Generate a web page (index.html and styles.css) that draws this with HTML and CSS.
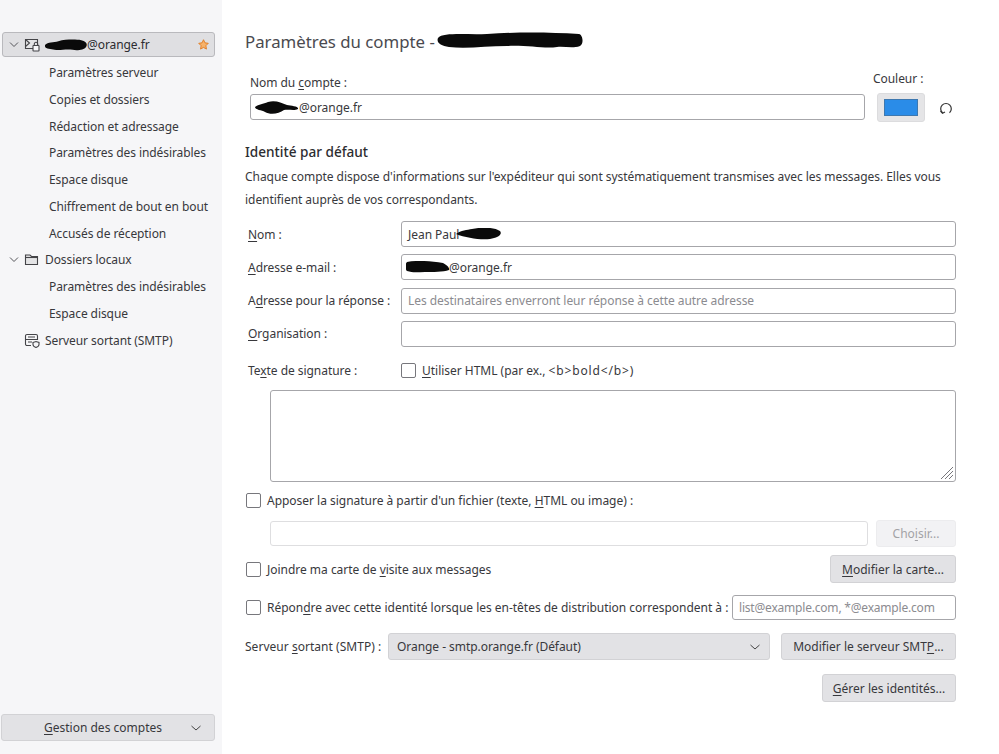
FILE: index.html
```html
<!DOCTYPE html>
<html lang="fr">
<head>
<meta charset="utf-8">
<title>Paramètres du compte</title>
<link rel="stylesheet" href="styles.css">
</head>
<body>
<div class="app">
  <aside class="sidebar">
    <nav class="tree">
      <div class="account selected">
        <svg class="twisty" viewBox="0 0 12 12"><path d="M2 3.500l4 4 4-4"/></svg>
        <svg class="icon" viewBox="0 0 16 14"><path class="soft" d="M1.500 1.500h12v9h-12z"/><path d="M1.500 1.500l4 3.500-4 3.500"/><rect class="white" x="9" y="7.500" width="6" height="5.500" rx=".5"/><path d="M10.300 7.500V6a1.700 1.700 0 0 1 3.400 0v1.500"/></svg>
        <span class="account-name"><svg class="blot blot-a" viewBox="0 0 44 12"><path d="M0 6C3 2 9 4 14 2 22 0 32 0 38 1c5 1 7 4 5 7-2 3-9 4-14 3-8-1-13 1-19 0-4-1-11 0-10-5z"/></svg>@orange.fr</span>
        <svg class="star" viewBox="0 0 12 12"><path d="M6 .8l1.600 3.400 3.600.5-2.600 2.600.6 3.700L6 9.200l-3.200 1.800.6-3.700L.8 4.700l3.600-.5z"/></svg>
      </div>
      <a class="sub">Paramètres serveur</a>
      <a class="sub">Copies et dossiers</a>
      <a class="sub">Rédaction et adressage</a>
      <a class="sub">Paramètres des indésirables</a>
      <a class="sub">Espace disque</a>
      <a class="sub">Chiffrement de bout en bout</a>
      <a class="sub">Accusés de réception</a>
      <div class="account">
        <svg class="twisty" viewBox="0 0 12 12"><path d="M2 3.500l4 4 4-4"/></svg>
        <svg class="icon" viewBox="0 0 16 14"><path class="soft" d="M1.500 11.500V2h4.500l1.500 1.500h6v8z"/><path d="M1.500 4.500h12"/></svg>
        <span>Dossiers locaux</span>
      </div>
      <a class="sub">Paramètres des indésirables</a>
      <a class="sub">Espace disque</a>
      <div class="account">
        <span class="twisty-gap"></span>
        <svg class="icon icon-smtp" viewBox="0 0 16 15"><path d="M7 12.500H3a1.500 1.500 0 0 1-1.500-1.500V3A1.500 1.500 0 0 1 3 1.500h9A1.500 1.500 0 0 1 13.500 3v4"/><path d="M1.500 6.500h12M4 4h7M4 9h4"/><path class="white" d="M9 9.500l3-1 3 1v2c0 1.500-1.500 2.500-3 3-1.500-.5-3-1.500-3-3z"/></svg>
        <span>Serveur sortant (SMTP)</span>
      </div>
    </nav>
    <button class="btn manage"><span><u>G</u>estion des comptes</span><svg class="chev" viewBox="0 0 12 12"><path d="M1.500 4l4.500 4 4.500-4"/></svg></button>
  </aside>

  <main class="main">
    <h1 class="title">Paramètres du compte - <svg class="blot blot-title" viewBox="0 0 146 18"><path d="M1 6C6 0 30 3 50 2c30-2 60-2 92 0 4 1 5 10 1 12-8 3-15 0-23 1-12 2-30-2-50-1-20 0-40 3-58 1C4 14-1 11 1 6z"/></svg></h1>

    <section class="account-row">
      <div class="name-col">
        <label class="lbl">Nom du <u>c</u>ompte :</label>
        <div class="input"><svg class="blot blot-b" viewBox="0 0 44 13"><path d="M0 6c4-3 8-3 13-5 8-2 13 1 19 3 4 1 12 1 11 4-4 2-9 0-14 1-5 4-14 5-19 2C7 9 0 9 0 6z"/></svg>@orange.fr</div>
      </div>
      <div class="color-col">
        <label class="lbl color-lbl">Couleur :</label>
        <div class="color-ctl">
          <button class="swatch-btn"><span class="swatch"></span></button>
          <svg class="reset" viewBox="0 0 14 14"><path d="M3.500 11.800A5.300 5.300 0 1 1 10.500 11.800"/><path d="M1.500 10l2 2.200 2.500-1.200"/></svg>
        </div>
      </div>
    </section>

    <h2 class="heading">Identité par défaut</h2>
    <p class="intro">Chaque compte dispose d'informations sur l'expéditeur qui sont systématiquement transmises avec les messages. Elles vous identifient auprès de vos correspondants.</p>

    <div class="identity">
      <label class="lbl"><u>N</u>om :</label>
      <div class="input">Jean Paul<svg class="blot blot-c" viewBox="0 0 46 12"><path d="M0 6c5-4 11-4 16-5 9-2 22-2 28 2 3 4-3 7-10 8-10 1-24-1-34-5z"/></svg></div>
      <label class="lbl"><u>A</u>dresse e-mail :</label>
      <div class="input flush"><svg class="blot blot-d" viewBox="0 0 44 12"><path d="M1 1c10-2 24-1 36 1 4 2 7 5 6 7-6 2-16 2-24 2-7 0-12 1-18-1-2-2-2-7 0-9z"/></svg>@orange.fr</div>
      <label class="lbl">A<u>d</u>resse pour la réponse :</label>
      <div class="input ph">Les destinataires enverront leur réponse à cette autre adresse</div>
      <label class="lbl"><u>O</u>rganisation :</label>
      <div class="input"></div>
      <label class="lbl sig-lbl">Te<u>x</u>te de signature :</label>
      <label class="check sig-lbl"><span class="box"></span><span><u>U</u>tiliser HTML (par ex., <span class="tag">&lt;b&gt;bold&lt;/b&gt;</span>)</span></label>
    </div>

    <div class="textarea">
      <svg class="grip" viewBox="0 0 14 14"><path d="M1 13L13 1M5 13l8-8M9 13l4-4"/></svg>
    </div>

    <label class="check sig-file"><span class="box"></span><span>Apposer la signature à partir d'un fichier (texte, <u>H</u>TML ou image) :</span></label>

    <div class="file-row">
      <div class="input disabled"></div>
      <button class="btn choose" disabled>Cho<u>i</u>sir...</button>
    </div>

    <div class="card-row">
      <label class="check"><span class="box"></span><span>Joindre ma carte de <u>v</u>isite aux messages</span></label>
      <button class="btn card-btn"><u>M</u>odifier la carte...</button>
    </div>

    <div class="reply-row">
      <label class="check"><span class="box"></span><span>Répon<u>d</u>re avec cette identité lorsque les en-têtes de distribution correspondent à :</span></label>
      <div class="input ph reply-input">list@example.com, *@example.com</div>
    </div>

    <div class="smtp-row">
      <label class="lbl">Serveur <u>s</u>ortant (SMTP) :</label>
      <div class="btn select"><span>Orange - smtp.orange.fr (Défaut)</span><svg class="chev" viewBox="0 0 12 12"><path d="M1.500 4l4.500 4 4.500-4"/></svg></div>
      <button class="btn smtp-btn">Modifier le serveur SMT<u>P</u>...</button>
    </div>

    <div class="identities-row">
      <button class="btn"><u>G</u>érer les identités...</button>
    </div>
  </main>
</div>
</body>
</html>
```
FILE: styles.css
```css
* { box-sizing: border-box; }
html, body { margin: 0; height: 754px; overflow: hidden; background: #fff; }
body, button { font-family: "Noto Sans", "Open Sans", sans-serif; font-size: 12px; color: #38383c; }
u { text-underline-offset: 2px; text-decoration-thickness: 1px; }
.app { display: flex; height: 754px; }

.sidebar { width: 222px; flex: none; background: #f6f6f8; display: flex; flex-direction: column; justify-content: space-between; padding: 32px 7px 13px 1px; letter-spacing: -0.08px; }
.tree { display: flex; flex-direction: column; }
.account { height: 26.800px; display: flex; align-items: center; padding-left: 6px; margin-left: 1px; line-height: 1; }
.account.selected { height: 25px; margin-bottom: 2.200px; background: #dfdfe2; border: 1px solid #b9b9bd; border-radius: 3px; padding-left: 5px; color: #2c2c30; }
.twisty { width: 12px; height: 12px; fill: none; stroke: #55555a; stroke-width: 1; flex: none; }
.twisty-gap { width: 12px; flex: none; }
.icon { width: 16px; height: 14px; margin-left: 4px; margin-right: 5px; fill: none; stroke: #444448; stroke-width: 1.100; flex: none; }
.icon .soft { fill: #e4e4e6; }
.icon .white { fill: #f6f6f8; }
.icon-smtp { height: 15px; }
.account-name { display: flex; align-items: center; flex: 1; }
.star { width: 11px; height: 11px; fill: #f6b26b; stroke: #e07b20; stroke-width: 1; margin-right: 5px; }
.sub { display: flex; align-items: center; height: 26.800px; padding-left: 48px; }

.blot { fill: #0a0a0a; flex: none; display: inline-block; vertical-align: middle; }
.blot-a { width: 42px; height: 12px; }
.blot-title { width: 146px; height: 18px; margin-left: -2px; margin-top: -2px; }
.blot-b { width: 44px; height: 13px; margin-left: -2px; }
.blot-c { width: 46px; height: 12px; margin-left: -3px; }
.blot-d { width: 44px; height: 12px; margin-left: -2px; margin-right: -1px; }

.main { flex: 1; padding: 0 43px 0 23px; min-width: 0; letter-spacing: -0.05px; }
.title { margin: 28px 0 0; font-size: 16.800px; font-weight: 400; line-height: 28px; color: #4a4a4f; display: flex; align-items: center; white-space: pre; letter-spacing: 0; }

.account-row { display: flex; margin-top: 14px; padding-left: 5px; }
.name-col { width: 615px; }
.name-col .lbl { display: block; line-height: 17px; margin-top: 4px; margin-bottom: 3px; }
.color-col { margin-left: 8px; }
.color-lbl { display: block; line-height: 17px; margin-bottom: 6px; }
.color-ctl { display: flex; align-items: center; margin-left: 4px; }
.swatch-btn { width: 48px; height: 29px; padding: 0; border: 1px solid #dcdcde; border-radius: 3px; background: #e5e5e7; display: flex; align-items: center; justify-content: center; }
.swatch { width: 34px; height: 17px; background: #2a8ce8; border: 1px solid #3d78b0; display: block; }
.reset { width: 14px; height: 14px; margin-left: 14px; fill: none; stroke: #333; stroke-width: 1.200; }

.lbl { color: #38383c; white-space: nowrap; }
.input { height: 26px; border: 1px solid #a6a6aa; border-radius: 3px; background: #fff; display: flex; align-items: center; padding-left: 6px; }
.input.ph { color: #8b8b90; }
.input.flush { padding-left: 6px; }
.input.disabled { border-color: #dedee0; }

.heading { margin: 20px 0 0; font-size: 13.600px; font-weight: 500; line-height: 20px; color: #2c2c30; letter-spacing: 0; }
.intro { margin: 3px 0 0; line-height: 23px; width: 711px; }

.identity { display: grid; grid-template-columns: 153px 1fr; column-gap: 0; row-gap: 7.300px; align-items: center; margin-top: 10px; padding-left: 3px; }
.sig-lbl { margin-top: 8px; }
.tag { letter-spacing: 0.85px; }

.check { display: flex; align-items: center; white-space: nowrap; letter-spacing: -0.02px; }
.box { width: 15px; height: 15px; border: 1px solid #77777c; border-radius: 2px; background: #fff; margin-right: 6px; flex: none; }

.textarea { position: relative; height: 92px; margin: 11px 0 0 25px; border: 1px solid #a6a6aa; border-radius: 3px; }
.grip { position: absolute; right: 1px; bottom: 1px; width: 14px; height: 14px; fill: none; stroke: #77777c; stroke-width: 1; }

.sig-file { margin-top: 10px; height: 17px; padding-left: 1px; }
.file-row { display: flex; gap: 8px; margin: 11px 0 0 25px; align-items: center; }
.file-row .input { flex: 1; height: 25px; }

.btn { border: 1px solid #d2d2d5; border-radius: 3px; background: #e2e2e5; color: #38383c; height: 28px; padding: 0 12px; display: flex; align-items: center; white-space: nowrap; }
.choose { width: 80px; height: 27px; justify-content: center; background: #f2f2f4; border-color: #ececee; color: #a2a2a6; }
.card-row { display: flex; justify-content: space-between; align-items: center; margin-top: 8px; padding-left: 1px; }
.card-btn { width: 126px; justify-content: center; padding: 0; }
.reply-row { display: flex; justify-content: space-between; align-items: center; margin-top: 12px; padding-left: 1px; }
.reply-input { width: 224px; height: 25px; padding-left: 6px; letter-spacing: -0.2px; }
.smtp-row { display: flex; align-items: center; margin-top: 13px; }
.smtp-row .lbl { width: 143px; letter-spacing: 0.03px; }
.select { width: 382px; justify-content: space-between; padding: 0 8px 0 8px; height: 27px; }
.smtp-btn { margin-left: 11px; width: 175px; height: 27px; justify-content: center; padding: 0; }
.identities-row { display: flex; justify-content: flex-end; margin-top: 14px; }
.identities-row .btn { width: 134px; justify-content: center; padding: 0; }

.chev { width: 12px; height: 12px; fill: none; stroke: #444; stroke-width: 1; flex: none; }
.manage { width: 214px; height: 27px; padding: 0 12px 0 42px; justify-content: space-between; }
```
